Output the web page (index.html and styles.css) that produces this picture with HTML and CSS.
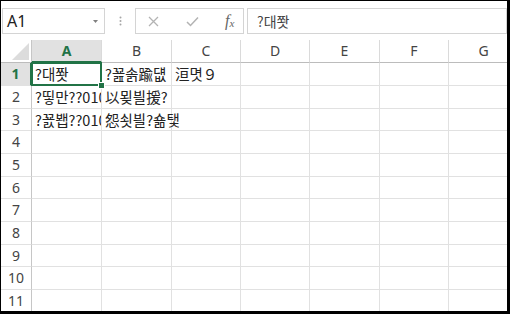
FILE: index.html
```html
<!DOCTYPE html>
<html lang="ko">
<head>
  <meta charset="UTF-8">
  <title>Book1 - Excel</title>
  <link rel="stylesheet" href="styles.css">
</head>
<body>
  <div class="window">
    <!-- Name box + formula bar -->
    <div class="toolbar">
      <div class="namebox">
        <span>A1</span>
        <svg class="dropdown" width="5" height="3" viewBox="0 0 5 3"><polygon points="0,0 5,0 2.5,3" fill="#808080"/></svg>
      </div>
      <div class="grip">
        <svg width="3" height="10" viewBox="0 0 3 10"><circle cx="1.5" cy="1.5" r="1" fill="#a6a6a6"/><circle cx="1.5" cy="5" r="1" fill="#a6a6a6"/><circle cx="1.5" cy="8.5" r="1" fill="#a6a6a6"/></svg>
      </div>
      <div class="fxbox">
        <svg class="icon-x" width="11" height="11" viewBox="0 0 11 11"><path d="M1 1 L10 10 M10 1 L1 10" stroke="#b3b3b3" stroke-width="1.3" fill="none"/></svg>
        <svg class="icon-ok" width="13" height="11" viewBox="0 0 13 11"><path d="M1 6 L4.5 9.5 L12 1.5" stroke="#b3b3b3" stroke-width="1.5" fill="none"/></svg>
        <span class="fx">f<sub>x</sub></span>
      </div>
      <div class="formula">?대쫫</div>
    </div>

    <!-- Worksheet -->
    <div class="sheet">
      <div class="corner"><svg width="17" height="17" viewBox="0 0 17 17"><polygon points="17,0 17,17 0,17" fill="#dcdcdc"/></svg></div>
      <div class="ch sel">A</div><div class="ch">B</div><div class="ch">C</div><div class="ch">D</div><div class="ch">E</div><div class="ch">F</div><div class="ch">G</div>

      <div class="rh sel">1</div>
      <div class="c active">?대쫫</div><div class="c">?꾪솕踰덊</div><div class="c">洹몃９</div><div class="c"></div><div class="c"></div><div class="c"></div><div class="c"></div>

      <div class="rh">2</div>
      <div class="c">?띻만??010</div><div class="c spill">以묒븰援?</div><div class="c"></div><div class="c"></div><div class="c"></div><div class="c"></div><div class="c"></div>

      <div class="rh">3</div>
      <div class="c">?꾨봽??010</div><div class="c spill">怨쇳븰?숆탳</div><div class="c"></div><div class="c"></div><div class="c"></div><div class="c"></div><div class="c"></div>

      <div class="rh">4</div><div class="c"></div><div class="c"></div><div class="c"></div><div class="c"></div><div class="c"></div><div class="c"></div><div class="c"></div>
      <div class="rh">5</div><div class="c"></div><div class="c"></div><div class="c"></div><div class="c"></div><div class="c"></div><div class="c"></div><div class="c"></div>
      <div class="rh">6</div><div class="c"></div><div class="c"></div><div class="c"></div><div class="c"></div><div class="c"></div><div class="c"></div><div class="c"></div>
      <div class="rh">7</div><div class="c"></div><div class="c"></div><div class="c"></div><div class="c"></div><div class="c"></div><div class="c"></div><div class="c"></div>
      <div class="rh">8</div><div class="c"></div><div class="c"></div><div class="c"></div><div class="c"></div><div class="c"></div><div class="c"></div><div class="c"></div>
      <div class="rh">9</div><div class="c"></div><div class="c"></div><div class="c"></div><div class="c"></div><div class="c"></div><div class="c"></div><div class="c"></div>
      <div class="rh">10</div><div class="c"></div><div class="c"></div><div class="c"></div><div class="c"></div><div class="c"></div><div class="c"></div><div class="c"></div>
      <div class="rh">11</div><div class="c"></div><div class="c"></div><div class="c"></div><div class="c"></div><div class="c"></div><div class="c"></div><div class="c"></div>
    </div>
  </div>
</body>
</html>
```

FILE: styles.css
```css
/* Excel-like sheet */
body {
  margin: 0;
  padding: 0;
  background-color: #fff;
  font-family: "Noto Sans", "Noto Sans CJK KR", sans-serif;
  color: #333;
}

.window {
  width: 510px;
  height: 314px;
  box-sizing: border-box;
  border-style: solid;
  border-color: #000;
  border-width: 1px 3px 3px 1px;
  overflow: hidden;
  background-color: #fff;
}

/* toolbar */
.toolbar {
  display: flex;
  align-items: flex-start;
  height: 39px;
  box-sizing: border-box;
  padding: 7px 0 0 1px;
}

.namebox,
.fxbox,
.formula {
  height: 26px;
  box-sizing: border-box;
  border: 1px solid #d4d4d4;
}

.namebox {
  display: flex;
  align-items: center;
  justify-content: space-between;
  width: 103px;
  padding: 0 6px 0 4px;
  font-size: 16px;
  color: #222;
}

.grip {
  width: 30px;
  height: 26px;
  display: flex;
  align-items: center;
  justify-content: center;
}

.fxbox {
  display: flex;
  align-items: center;
  width: 109px;
  padding-left: 12px;
}

.icon-ok {
  margin-left: 27px;
}

.fx {
  margin-left: 26px;
  font-family: "Liberation Serif", serif;
  font-style: italic;
  font-size: 16px;
  color: #666;
  line-height: 1;
}

.fx sub {
  font-size: 11px;
  vertical-align: -1px;
}

.formula {
  flex: 1;
  margin-left: 3px;
  padding-left: 9px;
  font-family: "Noto Sans CJK KR", sans-serif;
  font-size: 14px;
  line-height: 24px;
  color: #444;
}

/* sheet grid */
.sheet {
  display: grid;
  grid-template-columns: 31px 70px 70px 69px 69px 70px 69px 70px;
  grid-template-rows: 23px repeat(4, 23px 23px 22px);
  height: 271px;
  overflow: hidden;
}

.corner {
  display: flex;
  align-items: flex-end;
  justify-content: flex-end;
  padding: 0 2px 2px 0;
  box-sizing: border-box;
  border-right: 1px solid #c6c6c6;
  border-bottom: 1px solid #bcbcbc;
}

.ch {
  box-sizing: border-box;
  border-right: 1px solid #dadada;
  border-bottom: 1px solid #bcbcbc;
  text-align: center;
  font-size: 14px;
  line-height: 22px;
  color: #444;
}

.ch.sel {
  background-color: #e1e1e1;
  color: #217346;
  font-weight: bold;
  border-bottom: 2px solid #217346;
}

.rh {
  box-sizing: border-box;
  border-right: 1px solid #c6c6c6;
  border-bottom: 1px solid #e1e1e1;
  text-align: center;
  font-size: 14px;
  line-height: 22px;
  color: #444;
}

.rh.sel {
  background-color: #e1e1e1;
  color: #217346;
  font-weight: bold;
  border-right: 2px solid #217346;
}

.c {
  box-sizing: border-box;
  border-right: 1px solid #e1e1e1;
  border-bottom: 1px solid #e1e1e1;
  padding: 0 3px;
  font-family: "Noto Sans CJK KR", sans-serif;
  font-size: 14.5px;
  line-height: 22px;
  color: #222;
  white-space: nowrap;
  overflow: hidden;
}

/* text runs on into the empty cell to the right */
.c.spill {
  overflow: visible;
}

/* active cell frame with fill handle */
.c.active {
  position: relative;
  overflow: visible;
  z-index: 2;
}

.c.active::before {
  content: "";
  position: absolute;
  top: -1px;
  left: -1px;
  right: -1px;
  bottom: -1px;
  border: 2px solid #217346;
}

.c.active::after {
  content: "";
  position: absolute;
  right: -4px;
  bottom: -4px;
  width: 5px;
  height: 5px;
  background-color: #217346;
  border: 1px solid #fff;
}
```
